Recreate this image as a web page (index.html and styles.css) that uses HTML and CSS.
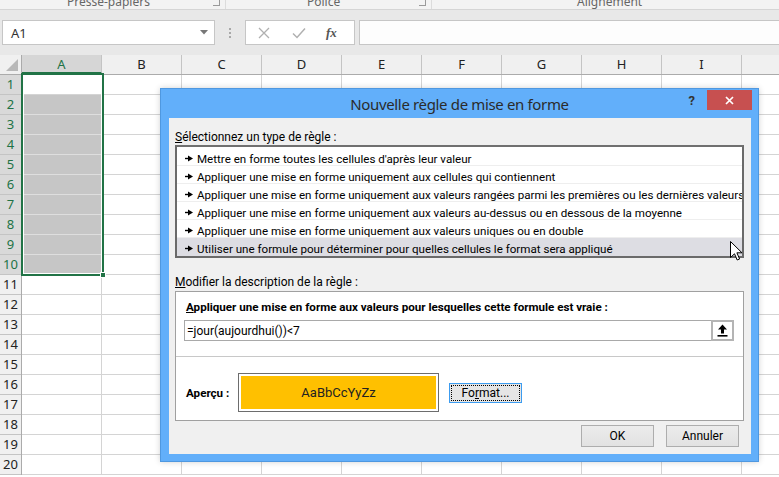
FILE: index.html
```html
<!DOCTYPE html>
<html lang="fr">
<head>
<meta charset="utf-8">
<title>Nouvelle règle de mise en forme</title>
<link rel="stylesheet" href="styles.css">
</head>
<body>
<div class="ribbon">
  <div class="grp g1"><span class="glabel">Presse-papiers</span><span class="launcher"></span></div>
  <div class="grp g2"><span class="glabel">Police</span><span class="launcher"></span></div>
  <div class="grp g3"><span class="glabel">Alignement</span></div>
</div>
<div class="fbar">
  <div class="namebox"><span class="nb-text">A1</span><svg class="dd" width="8" height="5" viewBox="0 0 8 5"><path d="M0 0H8L4 4.5Z" fill="#777"/></svg></div>
  <div class="dots"><i></i><i></i><i></i></div>
  <div class="fbtns">
    <svg width="12" height="12" viewBox="0 0 12 12"><path d="M1 1L11 11M11 1L1 11" stroke="#b0b0b0" stroke-width="1.3" fill="none"/></svg>
    <svg width="14" height="12" viewBox="0 0 14 12"><path d="M1 6.5L5 10.5L13 1.5" stroke="#b0b0b0" stroke-width="1.5" fill="none"/></svg>
    <span class="fx">fx</span>
  </div>
  <div class="finput"></div>
</div>
<div class="sheet">
  <div class="colhdr">
    <div class="corner"><svg width="12" height="12" viewBox="0 0 12 12"><path d="M12 0V12H0Z" fill="#b8b8b8"/></svg></div>
    <div class="ch sel">A</div>
    <div class="ch">B</div>
    <div class="ch">C</div>
    <div class="ch">D</div>
    <div class="ch">E</div>
    <div class="ch">F</div>
    <div class="ch">G</div>
    <div class="ch">H</div>
    <div class="ch">I</div>
    <div class="ch last"></div>
  </div>
  <div class="gridbody">
    <div class="rowhdrs">
      <div class="rh sel">1</div><div class="rh sel">2</div><div class="rh sel">3</div><div class="rh sel">4</div><div class="rh sel">5</div>
      <div class="rh sel">6</div><div class="rh sel">7</div><div class="rh sel">8</div><div class="rh sel">9</div><div class="rh sel">10</div>
      <div class="rh">11</div><div class="rh">12</div><div class="rh">13</div><div class="rh">14</div><div class="rh">15</div>
      <div class="rh">16</div><div class="rh">17</div><div class="rh">18</div><div class="rh">19</div><div class="rh">20</div>
    </div>
    <div class="cells">
      <div class="colA">
        <div class="cell"></div>
        <div class="cell hl"></div><div class="cell hl"></div><div class="cell hl"></div><div class="cell hl"></div><div class="cell hl"></div>
        <div class="cell hl"></div><div class="cell hl"></div><div class="cell hl"></div><div class="cell hl"></div>
        <div class="cell"></div><div class="cell"></div><div class="cell"></div><div class="cell"></div><div class="cell"></div>
        <div class="cell"></div><div class="cell"></div><div class="cell"></div><div class="cell"></div><div class="cell"></div>
      </div>
      <div class="rest"></div>
      <div class="selbox"><span class="handle"></span></div>
    </div>
  </div>
</div>

<div class="dialog">
  <div class="titlebar">
    <span></span>
    <span class="title">Nouvelle règle de mise en forme</span>
    <span class="tbtns"><span class="help">?</span><span class="close"><svg width="9" height="9" viewBox="0 0 9 9"><path d="M1 1L8 8M8 1L1 8" stroke="#fff" stroke-width="1.7" fill="none"/></svg></span></span>
  </div>
  <div class="client">
    <div class="lbl"><u>S</u>électionnez un type de règle :</div>
    <div class="listbox">
      <div class="item"><svg class="bul" width="8" height="7" viewBox="0 0 8 7"><path d="M0 3.5H4" stroke="#000" stroke-width="1.4"/><path d="M3 0.5L8 3.5L3 6.5Z" fill="#000"/></svg>Mettre en forme toutes les cellules d'après leur valeur</div>
      <div class="item"><svg class="bul" width="8" height="7" viewBox="0 0 8 7"><path d="M0 3.5H4" stroke="#000" stroke-width="1.4"/><path d="M3 0.5L8 3.5L3 6.5Z" fill="#000"/></svg>Appliquer une mise en forme uniquement aux cellules qui contiennent</div>
      <div class="item"><svg class="bul" width="8" height="7" viewBox="0 0 8 7"><path d="M0 3.5H4" stroke="#000" stroke-width="1.4"/><path d="M3 0.5L8 3.5L3 6.5Z" fill="#000"/></svg>Appliquer une mise en forme uniquement aux valeurs rangées parmi les premières ou les dernières valeurs</div>
      <div class="item"><svg class="bul" width="8" height="7" viewBox="0 0 8 7"><path d="M0 3.5H4" stroke="#000" stroke-width="1.4"/><path d="M3 0.5L8 3.5L3 6.5Z" fill="#000"/></svg>Appliquer une mise en forme uniquement aux valeurs au-dessus ou en dessous de la moyenne</div>
      <div class="item"><svg class="bul" width="8" height="7" viewBox="0 0 8 7"><path d="M0 3.5H4" stroke="#000" stroke-width="1.4"/><path d="M3 0.5L8 3.5L3 6.5Z" fill="#000"/></svg>Appliquer une mise en forme uniquement aux valeurs uniques ou en double</div>
      <div class="item selected"><svg class="bul" width="8" height="7" viewBox="0 0 8 7"><path d="M0 3.5H4" stroke="#000" stroke-width="1.4"/><path d="M3 0.5L8 3.5L3 6.5Z" fill="#000"/></svg>Utiliser une formule pour déterminer pour quelles cellules le format sera appliqué</div>
      <svg class="cursor" width="13" height="20" viewBox="0 0 13 20"><path d="M0.5 0.5V16.5L4.5 12.8L7.2 19L9.6 18L6.9 11.8H12Z" fill="#fff" stroke="#000" stroke-width="1"/></svg>
    </div>
    <div class="lbl lbl2"><u>M</u>odifier la description de la règle :</div>
    <div class="desc">
      <div class="dtitle"><u>A</u>ppliquer une mise en forme aux valeurs pour lesquelles cette formule est vraie :</div>
      <div class="formula"><span class="ftext">=jour(aujourdhui())&lt;7</span><span class="refbtn"><svg width="11" height="13" viewBox="0 0 11 13"><path d="M5.5 0.5L10 5.5H7V9.5H4V5.5H1Z" fill="#000"/><rect x="0.5" y="11" width="10" height="1.6" fill="#000"/></svg></span></div>
      <div class="sep"></div>
      <div class="prow">
        <span class="aplbl">Aperçu :</span>
        <div class="preview"><div class="pfill">AaBbCcYyZz</div></div>
        <div class="fmtbtn"><span class="focus">Fo<u>r</u>mat...</span></div>
      </div>
    </div>
    <div class="btns"><div class="btn">OK</div><div class="btn">Annuler</div></div>
  </div>
</div>
</body>
</html>
```
FILE: styles.css
```css
* { box-sizing: border-box; }
body {
  margin: 0;
  width: 779px;
  height: 477px;
  overflow: hidden;
  position: relative;
  background: #fff;
  font-family: Roboto, "Noto Sans", "Liberation Sans", sans-serif;
  font-size: 12px;
  color: #000;
}

/* ribbon group labels */
.ribbon {
  height: 10px;
  background: #f3f3f3;
  border-bottom: 1px solid #d5d5d5;
  display: flex;
  overflow: hidden;
  color: #666;
}
.grp { display: flex; position: relative; height: 9px; }
.g1 { width: 226px; padding-left: 67px; border-right: 1px solid #dcdcdc; }
.g2 { width: 206px; padding-left: 81px; border-right: 1px solid #dcdcdc; }
.g3 { flex: 1; padding-left: 145px; }
.glabel { font-family: "Noto Sans", sans-serif; font-size: 12px; line-height: 12px; margin-top: -4px; white-space: nowrap; }
.launcher {
  position: absolute; right: 5px; top: 0;
  width: 7px; height: 6px;
  border-right: 1px solid #9a9a9a; border-bottom: 1px solid #9a9a9a;
}

/* formula bar */
.fbar {
  height: 45px;
  background: #e8e8e8;
  display: flex;
  align-items: flex-start;
  padding-top: 10px;
}
.namebox {
  margin-left: 2px;
  width: 213px;
  height: 25px;
  background: #fff;
  border: 1px solid #c6c6c6;
  display: flex;
  align-items: center;
  padding: 0 6px 0 8px;
  justify-content: space-between;
}
.nb-text { font-family: "Noto Sans", sans-serif; font-size: 13px; color: #333; }
.dots {
  width: 30px; height: 25px;
  display: flex; flex-direction: column; align-items: center; justify-content: center; gap: 2px;
}
.dots i { width: 2px; height: 2px; background: #a8a8a8; display: block; }
.fbtns {
  width: 110px; height: 25px;
  background: #fff;
  border: 1px solid #c6c6c6;
  display: flex; align-items: center;
  padding-left: 12px; gap: 22px;
}
.fx { font-family: "Liberation Serif", serif; font-style: italic; font-weight: bold; font-size: 13px; color: #555; margin-left: -2px; }
.finput {
  flex: 1; height: 25px; margin-left: 4px;
  background: #fdfdfd;
  border: 1px solid #c6c6c6; border-right: none;
}

/* sheet */
.colhdr {
  display: flex;
  height: 20px;
  background: #f0f0f0;
  border-bottom: 1px solid #ababab;
}
.corner { width: 22px; display: flex; align-items: flex-end; justify-content: flex-end; padding: 0 3px 3px 0; border-right: 1px solid #ababab; }
.ch {
  width: 80px; flex: none;
  text-align: center;
  font-family: "Noto Sans", sans-serif;
  font-size: 13px; line-height: 19px;
  color: #222;
  border-right: 1px solid #c4c4c4;
}
.ch.sel { background: #d6d6d6; color: #217346; border-bottom: 2px solid #217346; }
.ch.last { flex: 1; border-right: none; }
.gridbody { display: flex; }
.rowhdrs { width: 22px; flex: none; background: #f0f0f0; border-right: 1px solid #ababab; }
.rh {
  height: 20px;
  border-bottom: 1px solid #c4c4c4;
  font-family: "Noto Sans", sans-serif;
  font-size: 13px; line-height: 19px;
  text-align: center;
  color: #222;
}
.rh.sel { background: #d9d9d9; color: #217346; }
.cells { display: flex; flex: 1; position: relative; }
.colA { width: 80px; flex: none; }
.cell { height: 20px; border-right: 1px solid #d4d4d4; border-bottom: 1px solid #d4d4d4; }
.cell.hl { background: #c6c6c6; border-bottom-color: #dedede; }
.rest {
  flex: 1; height: 400px;
  background-image:
    repeating-linear-gradient(to right, transparent 0 79px, #d4d4d4 79px 80px),
    repeating-linear-gradient(to bottom, transparent 0 19px, #d4d4d4 19px 20px);
}
.selbox {
  position: absolute;
  left: -1px; top: -2px;
  width: 83px; height: 203px;
  border: 2px solid #217346;
  box-shadow: inset 0 0 0 1px #fff;
}
.handle {
  position: absolute; right: -4px; bottom: -4px;
  width: 6px; height: 6px; background: #217346; border: 1px solid #fff;
}

/* dialog */
.dialog {
  position: absolute;
  left: 160px; top: 88px;
  width: 599px; height: 374px;
  background: #62affa;
  border: 1px solid #4f98e0;
  box-shadow: 0 0 6px rgba(0,0,0,0.18);
  display: flex; flex-direction: column;
}
.titlebar {
  height: 29px;
  display: grid;
  grid-template-columns: 1fr auto 1fr;
  flex: none;
}
.title {
  font-family: "Noto Sans", sans-serif;
  font-size: 15px; line-height: 28px;
  color: #2b2b2b;
  letter-spacing: -0.35px;
  padding-top: 1px;
}
.tbtns { display: flex; justify-content: flex-end; align-items: flex-start; }
.help { font-weight: bold; font-size: 13px; color: #333; margin-top: 4px; margin-right: 12px; }
.close {
  width: 45px; height: 20px; margin-right: 6px; margin-top: 1px;
  background: #c75050;
  display: flex; align-items: center; justify-content: center;
}
.client {
  flex: 1;
  margin: 0 7px 7px 8px;
  background: #f0f0f0;
  padding: 0 7px 0 6px;
  display: flex; flex-direction: column;
}
.lbl { margin-top: 12px; height: 15px; line-height: 15px; white-space: nowrap; }
.lbl2 { margin-top: 17px; }
.listbox {
  position: relative;
  height: 113px;
  background: #fff;
  border: 2px solid #6a6a6a;
  border-top-color: #707070;
  padding-top: 1px;
}
.item {
  height: 18px;
  display: flex; align-items: flex-start;
  white-space: nowrap;
  border-bottom: 1px solid #eeeeee;
  padding: 3px 0 0 8px;
  line-height: 16px;
  font-size: 11.6px;
  overflow: hidden;
}
.item.selected { background: #dddde3; border-bottom: none; }
.bul { margin: 4px 4px 0 0; flex: none; }
.cursor { position: absolute; left: 553px; top: 94px; }
.desc {
  margin-top: 1px;
  height: 130px;
  background: #fff;
  border: 1px solid #a0a0a0;
  display: flex; flex-direction: column;
}
.dtitle { font-weight: bold; font-size: 11.6px; margin: 8px 0 0 10px; line-height: 15px; white-space: nowrap; }
.formula {
  margin: 5px 9px 0 8px;
  height: 21px;
  border: 1px solid #a9a9a9;
  display: flex; align-items: center; justify-content: space-between;
}
.ftext { padding-left: 2px; }
.refbtn {
  width: 23px; height: 21px; margin-right: -1px;
  border: 2px solid #b4b4b4;
  background: #fff;
  display: flex; align-items: center; justify-content: center;
}
.sep { margin-top: 15px; height: 1px; background: #c8c8c8; }
.prow { margin-top: 16px; display: flex; align-items: center; padding-left: 10px; }
.aplbl { font-weight: bold; font-size: 11.6px; width: 52px; }
.preview {
  width: 201px; height: 39px;
  border: 1px solid #6d6d6d;
  padding: 2px;
  background: #fff;
}
.pfill {
  height: 100%;
  background: #ffc000;
  display: flex; align-items: center; justify-content: center;
  font-size: 13px; color: #222;
}
.fmtbtn {
  margin-left: 10px;
  width: 73px; height: 20px;
  border: 1px solid #3c9cf0;
  background: #e5e5e5;
  padding: 1px;
}
.focus {
  display: flex; align-items: center; justify-content: center;
  height: 100%;
  border: 1px dotted #000;
}
.btns { display: flex; justify-content: flex-end; gap: 12px; margin-top: 4px; padding-right: 5px; }
.btn {
  width: 73px; height: 22px;
  border: 1px solid #adadad;
  background: linear-gradient(#ececec, #e2e2e2);
  display: flex; align-items: center; justify-content: center;
}
```
